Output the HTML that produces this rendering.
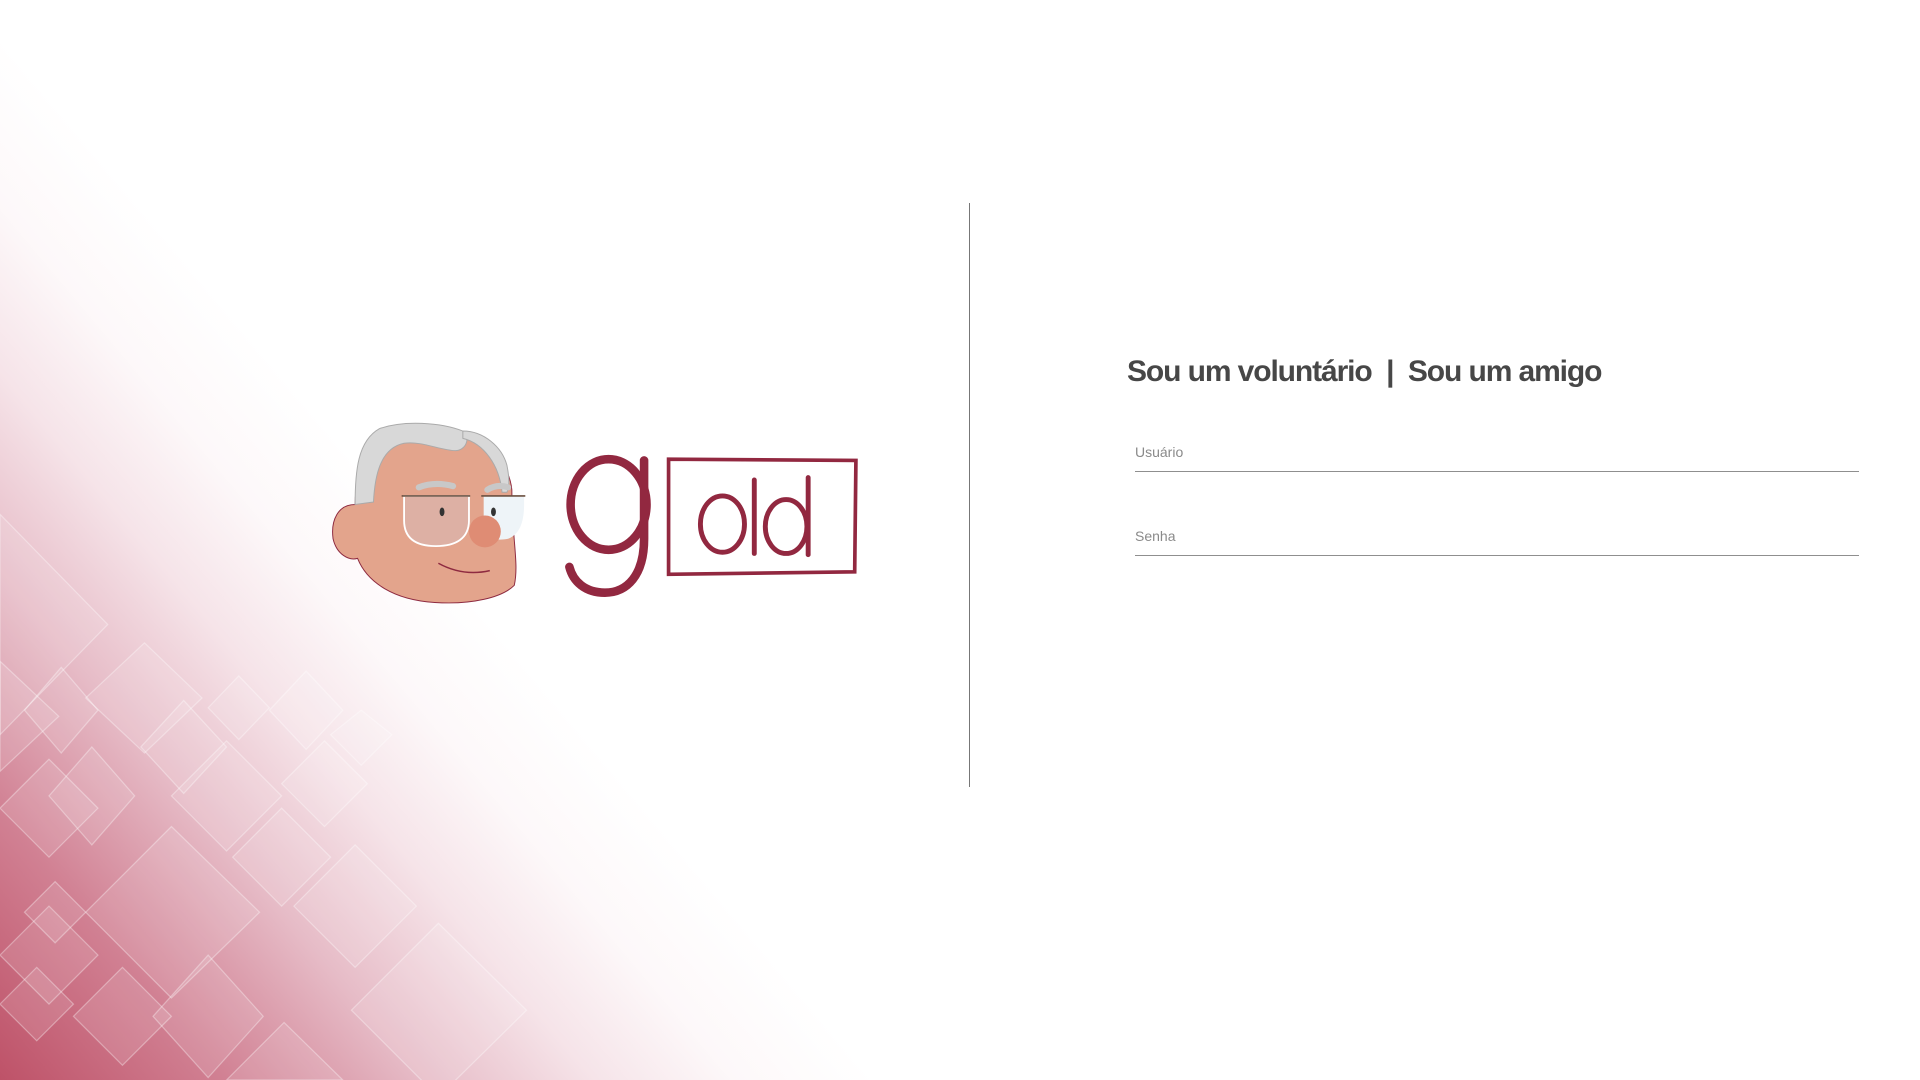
<!DOCTYPE html>
<html><head><meta charset="utf-8"><style>
html,body{margin:0;padding:0;width:1920px;height:1080px;overflow:hidden;background:#fff;font-family:"Liberation Sans",Arial,sans-serif}
.bg{position:absolute;left:0;top:0;width:1920px;height:1080px;
background:linear-gradient(50deg, rgba(190,82,104,1) 0%, rgba(205,118,138,0.92) 8%, rgba(222,165,180,0.75) 15%, rgba(238,205,214,0.55) 21%, rgba(248,232,236,0.3) 26%, rgba(255,255,255,0) 31%);}
svg.art{position:absolute;left:0;top:0}
.div{position:absolute;left:969px;top:203px;width:1px;height:584px;background:#777}
.title{position:absolute;left:1127px;top:355px;font-size:30px;font-weight:bold;letter-spacing:-1.1px;color:#474747;white-space:nowrap}
.lbl{position:absolute;left:1135px;font-size:14px;color:#8a8a8a}
.line{position:absolute;left:1135px;width:724px;height:1px;background:#8f8f8f}
</style></head><body>
<div class="bg"></div>
<svg class="art" width="1920" height="1080" viewBox="0 0 1568 882" preserveAspectRatio="none">
<g fill="rgba(255,255,255,0.12)" stroke="rgba(255,255,255,0.35)" stroke-width="1">
<polygon points="0,420 88,510 0,600"/>
<polygon points="0,540 48,585 0,630"/>
<polygon points="20,580 50,545 80,580 50,615"/>
<polygon points="70,570 118,525 165,570 118,615"/>
<polygon points="170,578 195,552 220,578 195,604"/>
<polygon points="220,580 250,548 280,580 250,612"/>
<polygon points="115,610 150,572 185,610 150,648"/>
<polygon points="140,650 185,605 230,650 185,695"/>
<polygon points="230,640 265,605 300,640 265,675"/>
<polygon points="270,600 295,580 320,600 295,625"/>
<polygon points="40,650 75,610 110,650 75,690"/>
<polygon points="0,660 40,620 80,660 40,700"/>
<polygon points="70,745 140,675 212,745 140,815"/>
<polygon points="190,700 230,660 270,700 230,740"/>
<polygon points="240,740 290,690 340,740 290,790"/>
<polygon points="20,745 45,720 70,745 45,770"/>
<polygon points="0,780 40,740 80,780 40,820"/>
<polygon points="60,830 100,790 140,830 100,870"/>
<polygon points="125,830 170,780 215,830 170,880"/>
<polygon points="287,825 358,754 430,825 358,896"/>
<polygon points="185,882 232,835 280,882"/>
<polygon points="0,820 30,790 60,820 30,850"/>
</g>
<path d="M305,372 C296,380 290,395 290,412 C276,412 270,425 272,440 C275,453 285,458 292,456 C300,476 322,490 355,492 C385,494 410,488 420,478 C424,460 418,440 418,400 C416,380 400,360 370,356 C340,352 318,358 305,372 Z" fill="#e3a48c" stroke="#8e2a40" stroke-width="0.8"/>
<path d="M290,412 C290,385 292,360 310,350 C330,343 360,345 378,352 C385,358 380,368 372,368 C360,368 345,360 330,362 C310,366 306,390 305,410 Z" fill="#d8d8d8" stroke="#aaa" stroke-width="0.8"/>
<path d="M378,352 C395,352 410,365 414,380 C416,390 416,398 414,402 L410,402 C408,380 395,362 378,358 Z" fill="#d8d8d8" stroke="#aaa" stroke-width="0.8"/>
<path d="M342,398 Q355,393 370,397" stroke="#c8c8c8" stroke-width="5" fill="none" stroke-linecap="round"/>
<path d="M398,400 Q406,395 415,398" stroke="#c8c8c8" stroke-width="5" fill="none" stroke-linecap="round"/>
<path d="M330,405 L330,425 C330,440 340,446 356,446 C372,446 383,440 383,425 L383,405 Z" fill="#ddb0a4" stroke="#fff" stroke-width="1.5"/>
<path d="M395,405 L395,430 C395,440 405,442 415,440 C425,436 428,425 428,412 L428,405 Z" fill="#eef4f8"/>
<circle cx="396" cy="434" r="13" fill="#df8c74"/>
<line x1="328" y1="405" x2="384" y2="405" stroke="#6b5040" stroke-width="1.3"/>
<line x1="393" y1="405" x2="429" y2="405" stroke="#6b5040" stroke-width="1.3"/>
<ellipse cx="361" cy="418" rx="2" ry="3.5" fill="#333"/>
<ellipse cx="403" cy="418" rx="2" ry="3.5" fill="#333"/>
<path d="M358,460 Q378,471 400,466" stroke="#8e2a40" stroke-width="1.2" fill="none"/>
<g stroke="#922840" fill="none" stroke-linecap="round">
<ellipse cx="497" cy="412" rx="31" ry="37" stroke-width="7"/>
<path d="M526,376 L526,440 C526,470 512,484 494,484 C478,484 468,475 465,463" stroke-width="7"/>
<path d="M546,375 L699,376 L698,467 L546,469 Z" stroke-width="3" stroke-linecap="butt"/>
<ellipse cx="590" cy="428" rx="18" ry="23" stroke-width="4"/>
<line x1="616" y1="392" x2="616" y2="452" stroke-width="4"/>
<ellipse cx="642" cy="430" rx="17" ry="22" stroke-width="4"/>
<line x1="660" y1="390" x2="660" y2="453" stroke-width="4"/>
</g>
</svg>
<div class="div"></div>
<div class="title">Sou um voluntário&nbsp;&nbsp;|&nbsp;&nbsp;Sou um amigo</div>
<div class="lbl" style="top:444px">Usuário</div>
<div class="line" style="top:471px"></div>
<div class="lbl" style="top:528px">Senha</div>
<div class="line" style="top:555px"></div>
</body></html>
